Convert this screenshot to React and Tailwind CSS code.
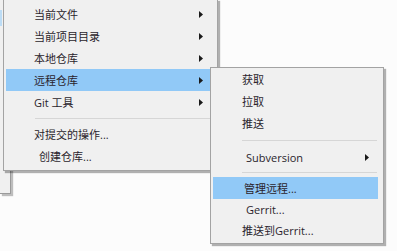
import { Fragment } from 'react';

const font = { fontFamily: '"Open Sans", "Noto Sans CJK SC", sans-serif' };

function Arrow() {
  return (
    <svg width="4" height="7" viewBox="0 0 4 7" className="shrink-0">
      <path d="M0 0 L4 3.5 L0 7 Z" fill="#1a1a1a" />
    </svg>
  );
}

function Item({ label, arrow, active, h = 'h-[22px]', pl = 'pl-[28px]', pr = 'pr-[12px]', mr = 'mr-[2px]' }) {
  return (
    <div className={`flex items-center justify-between ml-[2px] ${mr} ${h} ${pl} ${pr} ${active ? 'bg-[#91c9f7]' : ''}`}>
      <span className="text-[11px] leading-none text-[#2a1e2c]">{label}</span>
      {arrow && <Arrow />}
    </div>
  );
}

function Sep({ h, ml }) {
  return (
    <div className={`flex items-center ${h}`}>
      <div className={`h-px flex-1 bg-[#d6d6d6] ${ml} mr-[6px]`} />
    </div>
  );
}

export default function App() {
  return (
    <div className="relative w-[397px] h-[251px] bg-[#fcfcfc] overflow-hidden" style={font}>
      {/* menu behind */}
      <div className="absolute left-0 top-0 w-[11px] h-[194px] bg-[#f0f0f0] border-r border-b border-[#9a9a9a] shadow-[2px_2px_1px_rgba(0,0,0,0.25)]">
        <div className="mt-[10px] h-[16px] w-[2px] bg-[#bcdcf5]" />
      </div>

      {/* main menu */}
      <div className="absolute left-[3px] top-[-1px] w-[215px] h-[172px] bg-[#f0f0f0] border border-[#a3a3a3] shadow-[2px_2px_1px_rgba(0,0,0,0.3)] pt-[3px]">
        <Item label="当前文件" arrow />
        <Item label="当前项目目录" arrow />
        <Item label="本地仓库" arrow />
        <Item label="远程仓库" arrow active />
        <Item label="Git 工具" arrow />
        <Sep h="h-[10px]" ml="ml-[31px]" />
        <Item label="对提交的操作..." />
        <Item label="创建仓库..." pl="pl-[33px]" />
      </div>

      {/* submenu */}
      <div className="absolute left-[210px] top-[67px] w-[174px] h-[177px] bg-[#f0f0f0] border border-[#a3a3a3] shadow-[2px_2px_1px_rgba(0,0,0,0.3)]">
        <Item label="获取" pl="pl-[29px]" />
        <Item label="拉取" pl="pl-[29px]" />
        <Item label="推送" pl="pl-[29px]" />
        <Sep h="h-[12px]" ml="ml-[31px]" />
        <Item label="Subversion" arrow pl="pl-[33px]" pr="pr-[12px]" />
        <Sep h="h-[9px]" ml="ml-[31px]" />
        <Item label="管理远程..." active pl="pl-[31px]" mr="mr-[5px]" />
        <Item label="Gerrit..." h="h-[21px]" pl="pl-[33px]" />
        <Item label="推送到Gerrit..." h="h-[21px]" pl="pl-[29px]" />
      </div>
    </div>
  );
}
